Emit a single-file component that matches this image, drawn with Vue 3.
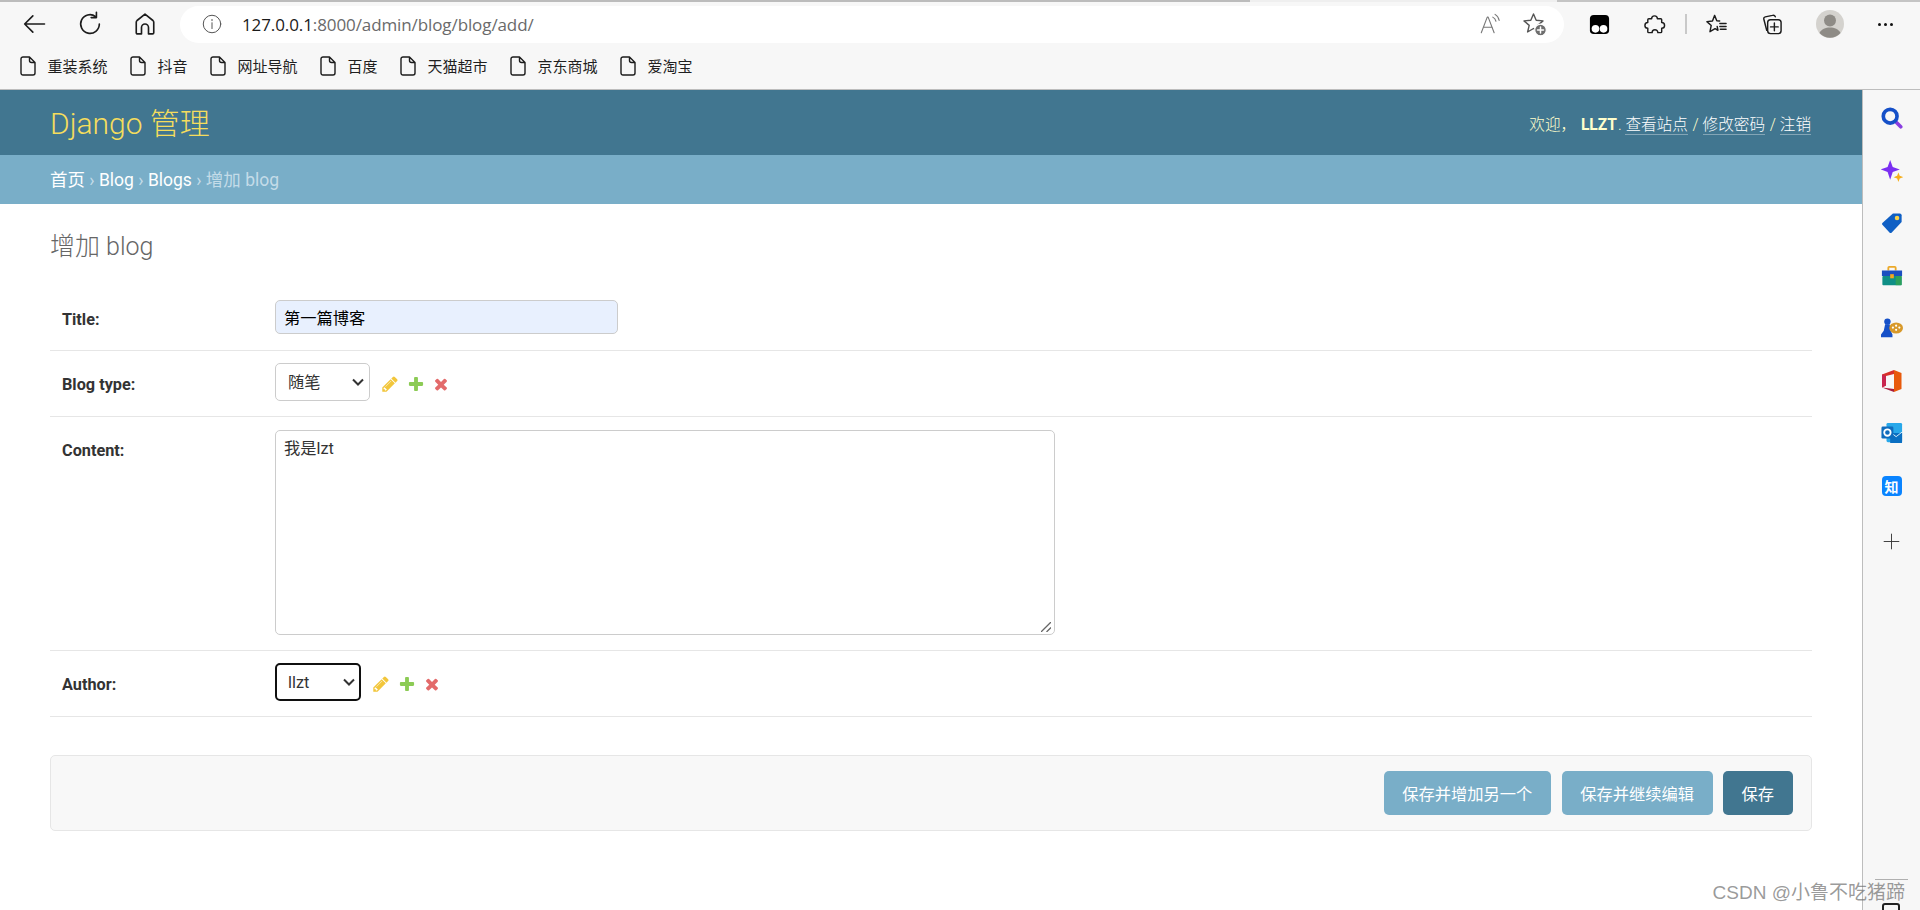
<script setup>
const bookmarks = ['重装系统', '抖音', '网址导航', '百度', '天猫超市', '京东商城', '爱淘宝']
const contentText = '我是lzt'
const linkIcons = [
  { cls: 'pencil', d: 'M491 1536l91-91-235-235-91 91v107h128v128h107zm523-928q0-22-22-22-10 0-17 7l-542 542q-7 7-7 17 0 22 22 22 10 0 17-7l542-542q7-7 7-17zm-54-192l416 416-832 832h-416v-416zm683 96q0 53-37 90l-166 166-416-416 166-165q36-38 90-38 53 0 91 38l235 234q37 39 37 91z' },
  { cls: 'plus', d: 'M1600 796v192q0 40-28 68t-68 28h-416v416q0 40-28 68t-68 28h-192q-40 0-68-28t-28-68v-416h-416q-40 0-68-28t-28-68v-192q0-40 28-68t68-28h416v-416q0-40 28-68t68-28h192q40 0 68 28t28 68v416h416q40 0 68 28t28 68z' },
  { cls: 'cross', d: 'M1490 1322q0 40-28 68l-136 136q-28 28-68 28t-68-28l-294-294-294 294q-28 28-68 28t-68-28l-136-136q-28-28-28-68t28-68l294-294-294-294q-28-28-28-68t28-68l136-136q28-28 68-28t68 28l294 294 294-294q28-28 68-28t68 28l136 136q28 28 28 68t-28 68l-294 294 294 294q28 28 28 68z' }
]
</script>

<template>
  <div class="window">
    <div class="tabline"><i class="seg-a"></i><i class="seg-b"></i><i class="seg-c"></i></div>
    <div class="toolbar">
      <div class="nav-icons">
        <svg class="ic" viewBox="0 0 24 24"><path d="M21 12H4M11 5l-7 7 7 7" /></svg>
        <svg class="ic" viewBox="0 0 24 24"><path d="M20 12a8 8 0 1 1-3.200-6.400M17.500 2v4.500H13" /></svg>
        <svg class="ic" viewBox="0 0 24 24"><path d="M5.500 20.500a1 1 0 0 1-1-1V10.500a2 2 0 0 1 .7-1.500L12 3.500 18.800 9a2 2 0 0 1 .7 1.500v9a1 1 0 0 1-1 1h-3.500v-5.500a3 3 0 0 0-6 0v5.500z" /></svg>
      </div>
      <div class="address">
        <svg class="ic info" viewBox="0 0 24 24"><circle cx="12" cy="12" r="10.500" /><path d="M12 10.500v7M12 6.500v1.500" /></svg>
        <span class="url"><span class="host">127.0.0.1</span>:8000/admin/blog/blog/add/</span>
        <svg class="ic read" viewBox="0 0 24 24"><path d="M2.500 21.500l6.500-17h1l6.500 17M5 15.500h9.500M15 4.500c2 1 3 2.500 3.500 4.500M17.500 1.500c2.500 1.500 4 3.500 4.500 6.500" /></svg>
        <svg class="ic fav" viewBox="0 0 24 24">
          <path d="M10.500 2l2.700 6.300 6.800.6-5.200 4.500 1.600 6.600-5.900-3.500-5.900 3.500 1.600-6.600L1 8.900l6.800-.6z" />
          <circle class="fav-badge" cx="17.500" cy="18" r="5.800" />
          <path class="fav-plus" d="M17.500 15v6M14.500 18h6" />
        </svg>
      </div>
      <div class="ext-icons">
        <svg class="ic ext tamper" viewBox="0 0 24 24">
          <rect x="2" y="2" width="20" height="20" rx="4" />
          <circle class="tamper-eye" cx="7.800" cy="16.500" r="4" />
          <circle class="tamper-eye" cx="16.200" cy="16.500" r="4" />
        </svg>
        <svg class="ic ext puzzle" viewBox="0 0 24 24"><path d="M9 6a3 3 0 0 1 6 0h3.500a1 1 0 0 1 1 1v3a3 3 0 0 1 0 6v3.500a1 1 0 0 1-1 1h-3a3 3 0 0 0-6 0H6a1 1 0 0 1-1-1v-3.500a3 3 0 0 1 0-6V7a1 1 0 0 1 1-1z" /></svg>
        <span class="divider"></span>
        <svg class="ic ext favs" viewBox="0 0 24 24"><path d="M10 2.500l2.300 5.500 3 .3M7.800 8.300L2 9l4.500 4-1.300 6.500 5.300-3.200 3 1.700-.8-4M7.800 8.300L10 2.500M15.500 11H22M15.500 14H22M16 17h6" /></svg>
        <svg class="ic ext colls" viewBox="0 0 24 24">
          <path d="M7 18L4 6.500a2 2 0 0 1 1.500-2.500L13 2.500a2.500 2.500 0 0 1 3 1.500" />
          <rect x="8" y="7" width="14" height="14.500" rx="3" />
          <path d="M15 10.500v8M11 14.500h8" />
        </svg>
        <svg class="avatar" viewBox="0 0 28 28">
          <circle cx="14" cy="14" r="14" fill="#d4d2ce" />
          <circle cx="14" cy="10.500" r="6" fill="#8e8b86" />
          <path d="M3.500 23c2-4 6-5.500 10.500-5.500s8.500 1.500 10.500 5.500a14 14 0 0 1-21 0z" fill="#8e8b86" />
        </svg>
        <span class="dots"><i></i><i></i><i></i></span>
      </div>
    </div>

    <div class="bookmarks">
      <div v-for="b in bookmarks" :key="b" class="bookmark">
        <svg class="doc" viewBox="0 0 16 20"><path d="M3 1h6.500L15 6.500V17a2 2 0 0 1-2 2H3a2 2 0 0 1-2-2V3a2 2 0 0 1 2-2zM9.500 1v3.500a2 2 0 0 0 2 2H15" /></svg>
        <span>{{ b }}</span>
      </div>
    </div>

    <div class="viewport">
      <div class="page">
        <header class="site-header">
          <div class="brand">Django 管理</div>
          <div class="user-tools">
            欢迎， <strong>LLZT</strong>.
            <a>查看站点</a> / <a>修改密码</a> / <a>注销</a>
          </div>
        </header>
        <nav class="crumbs">
          <a>首页</a> <span class="sep">›</span> <a>Blog</a> <span class="sep">›</span> <a>Blogs</a> <span class="sep">›</span> <span class="now">增加 blog</span>
        </nav>
        <main class="content">
          <h1>增加 blog</h1>
          <form class="form" @submit.prevent>
            <div class="row">
              <label class="lbl-center">Title:</label>
              <input class="text" type="text" value="第一篇博客" />
            </div>
            <div class="row">
              <label class="lbl-center">Blog type:</label>
              <div class="field">
                <div class="sel-wrap">
                  <select class="sel sel-type"><option>随笔</option></select>
                  <svg class="chev" viewBox="0 0 12 8"><path d="M1 1.500l5 5 5-5" /></svg>
                </div>
                <div class="links">
                  <svg v-for="i in linkIcons" :key="i.cls" :class="['link-ic', i.cls]" viewBox="0 0 1792 1792"><path :d="i.d" /></svg>
                </div>
              </div>
            </div>
            <div class="row">
              <label class="lbl-top">Content:</label>
              <div class="area-wrap">
                <textarea class="area" :value="contentText"></textarea>
                <svg class="grip" viewBox="0 0 10 10"><path d="M0 10L10 0M5.500 10L10 5.500" /></svg>
              </div>
            </div>
            <div class="row">
              <label class="lbl-center">Author:</label>
              <div class="field">
                <div class="sel-wrap">
                  <select class="sel sel-author"><option>llzt</option></select>
                  <svg class="chev" viewBox="0 0 12 8"><path d="M1 1.500l5 5 5-5" /></svg>
                </div>
                <div class="links">
                  <svg v-for="i in linkIcons" :key="i.cls" :class="['link-ic', i.cls]" viewBox="0 0 1792 1792"><path :d="i.d" /></svg>
                </div>
              </div>
            </div>
            <div class="submit-row">
              <button class="btn first">保存并增加另一个</button>
              <button class="btn">保存并继续编辑</button>
              <button class="btn primary">保存</button>
            </div>
          </form>
        </main>
      </div>

      <aside class="sidebar">
        <svg class="side" viewBox="0 0 24 24">
          <path d="M15.500 15.500l6 6" stroke="#8a3fe0" stroke-width="4" stroke-linecap="round" fill="none" />
          <circle cx="10" cy="10" r="7.500" fill="none" stroke="#1550c8" stroke-width="4" />
        </svg>
        <svg class="side" viewBox="0 0 24 24">
          <path d="M10 0l2.800 7.500 7.700 2.800-7.700 2.800-2.800 8.400-2.800-8.400L-.5 10.300 7.200 7.500z" fill="#7b2ff2" />
          <path d="M19 13.500l1.400 3.800 3.800 1.400-3.800 1.400L19 24l-1.400-3.900-3.800-1.400 3.800-1.400z" fill="#f6ae1c" />
        </svg>
        <svg class="side" viewBox="0 0 24 24">
          <path d="M13 1.500h7.500a2 2 0 0 1 2 2V11L11.500 22.500a1.500 1.500 0 0 1-2 0L1.500 14a1.500 1.500 0 0 1 0-2z" fill="#0f5fc4" />
          <circle cx="17.500" cy="6.500" r="2.500" fill="#f8d24a" />
        </svg>
        <svg class="side" viewBox="0 0 24 24">
          <path d="M8 6V3a1 1 0 0 1 1-1h6a1 1 0 0 1 1 1v3" fill="none" stroke="#eba92a" stroke-width="2" />
          <rect x="1" y="6" width="22" height="6" fill="#1b4fc0" />
          <rect x="1.500" y="12" width="21" height="10" rx="1" fill="#0f8f86" />
          <rect x="16" y="12" width="6.500" height="10" fill="#2ca05a" />
          <rect x="10" y="10" width="4" height="4.500" fill="#f4a81f" />
        </svg>
        <svg class="side" viewBox="0 0 24 24">
          <circle cx="7" cy="5" r="3.500" fill="#1550c8" />
          <path d="M4.500 8h5l1 7 2 4v3H0v-3l3-4z" fill="#1550c8" />
          <ellipse cx="16.500" cy="12" rx="7.500" ry="6" fill="#d8992a" />
          <circle cx="13" cy="11.500" r="1.200" fill="#fff" /><circle cx="16.500" cy="9.500" r="1.200" fill="#fff" />
          <circle cx="20" cy="11.500" r="1.200" fill="#fff" /><circle cx="16.500" cy="14" r="1.200" fill="#fff" />
        </svg>
        <svg class="side office" viewBox="0 0 24 24">
          <path d="M14 1l7.500 3v16L14 23z" fill="#e85a0c" />
          <path d="M2 5.500L14 1v4L6 7v9.500l-4 2z" fill="#d8302a" />
          <path d="M2 18.500L14 20v3z" fill="#a81c3c" />
          <path d="M2 5.500L6 7v9.500l-4 2z" fill="#c8264f" />
        </svg>
        <svg class="side" viewBox="0 0 24 24">
          <rect x="6" y="1" width="17" height="21" rx="1.500" fill="#28a8ea" />
          <path d="M10 12l13-0v10a1 1 0 0 1-1 1H10z" fill="#0a6fc2" />
          <path d="M10 11l6.500 5 6.500-5" fill="none" stroke="#e8f4fd" stroke-width="1" />
          <rect x="0.500" y="5" width="13" height="13" rx="1.500" fill="#0f6cbd" />
          <circle cx="7" cy="11.500" r="3.500" fill="none" stroke="#fff" stroke-width="2" />
        </svg>
        <div class="zhihu">知</div>
        <svg class="side add" viewBox="0 0 24 24"><path d="M12 1v22M1 12h22" /></svg>
      </aside>

      <div class="watermark">CSDN @小鲁不吃猪蹄</div>
      <i class="side-rule"></i>
      <i class="side-peek"></i>
    </div>
  </div>
</template>

<style>
html, body { margin: 0; background: #fff; }
</style>

<style scoped>
.window {
  width: 1920px;
  height: 910px;
  overflow: hidden;
  display: flex;
  flex-direction: column;
  background: #f7f7f7;
  font-family: Roboto, "Noto Sans CJK SC", sans-serif;
}
.tabline { display: flex; height: 2px; flex: none; }
.seg-a { width: 1250px; background: #bcbcbc; }
.seg-b { width: 307px; background: #efefef; }
.seg-c { flex: 1; background: #c4c4c4; }
.ic { fill: none; stroke: #1c1c1c; stroke-width: 1.4; stroke-linecap: round; stroke-linejoin: round; flex: none; }
.toolbar {
  height: 44px;
  display: flex;
  align-items: center;
  padding-left: 20px;
}
.nav-icons { display: flex; gap: 27.500px; width: 160px; flex: none; }
.nav-icons .ic { width: 28px; height: 28px; }
.address {
  width: 1384px;
  height: 37px;
  background: #fff;
  border-radius: 19px;
  display: flex;
  align-items: center;
  padding-left: 22px;
  box-sizing: border-box;
  flex: none;
}
.info { width: 20px; height: 20px; stroke: #555; stroke-width: 1.200; }
.url {
  margin-left: 20px;
  font-family: "Open Sans", sans-serif;
  font-size: 17px;
  color: #6a6a6a;
  flex: 1;
  letter-spacing: -0.1px;
}
.host { color: #1a1a1a; }
.read { width: 22px; height: 22px; stroke: #777; stroke-width: 1.2; margin-right: 22px; }
.fav { width: 24px; height: 24px; stroke: #555; margin-right: 17px; }
.fav-badge { fill: #6e6e6e; stroke: #fff; stroke-width: 1.200; }
.fav-plus { stroke: #fff; stroke-width: 1.5; }
.ext-icons { display: flex; align-items: center; flex: 1; padding-left: 24px; }
.ext { width: 23px; height: 23px; }
.tamper { stroke: none; }
.tamper rect { fill: #000; }
.tamper-eye { fill: #fff; }
.puzzle { margin-left: 32px; stroke-width: 1.5; }
.divider { width: 2px; height: 20px; background: #c9c9c9; margin-left: 19px; }
.favs { margin-left: 18px; stroke-width: 1.5; }
.colls { margin-left: 32px; stroke-width: 1.5; }
.avatar { width: 28px; height: 28px; margin-left: 33px; }
.dots { display: flex; gap: 3px; margin-left: 34px; }
.dots i { width: 3px; height: 3px; border-radius: 50%; background: #111; }

.bookmarks {
  height: 43px;
  box-sizing: border-box;
  padding: 0 0 4px 20px;
  display: flex;
  align-items: center;
  gap: 22.500px;
  font-size: 15px;
  color: #1f1f1f;
  font-family: "Noto Sans CJK SC", sans-serif;
}
.bookmark { display: flex; align-items: center; gap: 11.500px; }
.doc { width: 16px; height: 20px; fill: none; stroke: #1c1c1c; stroke-width: 1.400; stroke-linejoin: round; }

.viewport { flex: 1; min-height: 0; display: flex; position: relative; border-top: 1px solid #bdbdbd; }
.page { flex: 1; min-width: 0; background: #fff; }
.site-header {
  height: 65px;
  background: #417690;
  display: flex;
  align-items: center;
  justify-content: space-between;
  padding: 0 50px;
}
.brand { font-size: 30px; font-weight: 300; color: #f5dd5d; margin-top: -4px; }
.user-tools { font-size: 15.600px; color: #ffc; font-weight: 300; }
.user-tools strong { font-weight: 700; margin-left: 1px; margin-right: 1px; }
.user-tools a { color: #fff; border-bottom: 1px solid rgba(255, 255, 255, 0.35); margin-right: 1px; }
.crumbs {
  height: 49px;
  box-sizing: border-box;
  background: #79aec8;
  padding: 1px 50px 0;
  line-height: 49px;
  font-size: 17.500px;
  color: #fff;
}
.sep { color: #c4dce8; }
.now { color: #c4dce8; }
.content { padding: 23px 50px 0; }
h1 { margin: 0; font-size: 25px; font-weight: 300; color: #666; line-height: 40px; }
.form { margin-top: 21px; }
.row {
  display: flex;
  border-bottom: 1px solid #e6e6e6;
  padding: 12px 12px 15px;
  font-size: 16.250px;
}
.row:first-child { padding-bottom: 16px; }
.row label {
  width: 213px;
  flex: none;
  font-weight: 700;
  color: #333;
  line-height: 20px;
}
.row label.lbl-center { align-self: center; padding-top: 5px; }
.row label.lbl-top { padding-top: 12px; }
.text {
  width: 343px;
  height: 34px;
  box-sizing: border-box;
  border: 1px solid #ccc;
  border-radius: 5px;
  background: #e8f0fe;
  color: #000;
  padding: 0 8px;
  font-size: 16.250px;
  font-family: Roboto, "Noto Sans CJK SC", sans-serif;
}
.field { display: flex; align-items: center; }
.sel-wrap { position: relative; display: flex; }
.sel {
  appearance: none;
  height: 38px;
  box-sizing: border-box;
  border: 1px solid #ccc;
  border-radius: 5px;
  background: #fff;
  color: #333;
  padding: 0 0 0 12px;
  font-size: 16.250px;
  font-family: Roboto, "Noto Sans CJK SC", sans-serif;
}
.sel-type { width: 95px; }
.sel-author { width: 86px; border: 2px solid #101010; padding-left: 11px; }
.chev {
  position: absolute;
  right: 6px;
  top: 15px;
  width: 12px;
  height: 8px;
  fill: none;
  stroke: #333;
  stroke-width: 2;
  pointer-events: none;
}
.links { display: flex; align-items: center; gap: 7.500px; margin: 3px 0 0 11px; }
.link-ic { width: 18px; height: 18px; opacity: 0.8; }
.pencil { fill: #efb80b; }
.plus { fill: #70bf2b; }
.cross { fill: #dd4646; }
.area-wrap { position: relative; display: flex; padding-top: 1px; }
.area {
  display: block;
  width: 780px;
  height: 205px;
  box-sizing: border-box;
  border: 1px solid #ccc;
  border-radius: 5px;
  padding: 8px 8px;
  color: #333;
  font-size: 16.250px;
  font-family: Roboto, "Noto Sans CJK SC", sans-serif;
  line-height: 20px;
  resize: none;
}
.grip {
  position: absolute;
  right: 4px;
  bottom: 3px;
  width: 10px;
  height: 10px;
  fill: none;
  stroke: #666;
  stroke-width: 1.300;
  pointer-events: none;
}
.submit-row {
  margin-top: 38px;
  height: 76px;
  box-sizing: border-box;
  border: 1px solid #e6e6e6;
  border-radius: 5px;
  background: #f8f8f8;
  display: flex;
  align-items: center;
  justify-content: flex-end;
  gap: 10px;
  padding-right: 18px;
}
.btn {
  height: 44px;
  border: 0;
  border-radius: 5px;
  background: #79aec8;
  color: #fff;
  padding: 0 18.500px;
  font-size: 16.250px;
  font-family: Roboto, "Noto Sans CJK SC", sans-serif;
}
.first { margin-right: 1px; }
.primary { background: #417690; padding: 0 19px; }

.sidebar {
  width: 58px;
  flex: none;
  box-sizing: border-box;
  border-left: 1px solid #bdbdbd;
  background: #f7f7f7;
  display: flex;
  flex-direction: column;
  align-items: center;
  padding-top: 17px;
  gap: 30.500px;
}
.side { width: 22px; height: 22px; flex: none; }
.office { width: 24px; height: 24px; margin: -1px 0; }
.zhihu {
  width: 20px;
  height: 20px;
  border-radius: 4px;
  background: #0a84ff;
  color: #fff;
  font-size: 14px;
  font-weight: 700;
  line-height: 20px;
  text-align: center;
  font-family: "Noto Sans CJK SC", sans-serif;
  margin: 1px 0;
}
.add { width: 17px; height: 17px; fill: none; stroke: #333; stroke-width: 1.300; margin-top: 6px; }
.watermark {
  position: absolute;
  right: 15px;
  bottom: 6px;
  font-size: 19px;
  color: rgba(110, 110, 110, 0.7);
  font-family: "Liberation Sans", "Noto Sans CJK SC", sans-serif;
  white-space: nowrap;
}
.side-rule {
  position: absolute;
  left: 1875px;
  bottom: 30px;
  width: 33px;
  height: 1px;
  background: #b0b0b0;
}
.side-peek {
  position: absolute;
  left: 1882px;
  bottom: -3px;
  width: 14px;
  height: 6px;
  border: 2px solid #222;
  border-radius: 3px;
}
</style>
